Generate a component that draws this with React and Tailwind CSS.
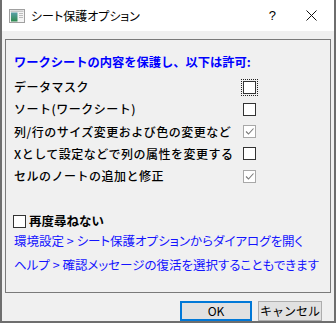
import React from "react";

const jp = "font-['Noto_Sans_CJK_JP','Noto_Sans',sans-serif]";

function Box({ checked, focus }) {
  return (
    <div
      className={`relative w-[13px] h-[13px] bg-white border ${checked ? "border-[#a8a8a8]" : "border-[#333333]"} ${focus ? "outline outline-1 outline-dotted outline-[#222] outline-offset-[1px]" : ""}`}
    >
      {checked && (
        <svg width="11" height="11" viewBox="0 0 11 11" className="absolute left-0 top-0">
          <path d="M2 5.5 L4.5 8 L9.5 2.5" fill="none" stroke="#7a7a7a" strokeWidth="1.1" />
        </svg>
      )}
    </div>
  );
}

const rows = [
  { t: "データマスク", c: false, f: true },
  { t: "ソート(ワークシート)", c: false },
  { t: "列/行のサイズ変更および色の変更など", c: true },
  { t: "Xとして設定などで列の属性を変更する", c: false },
  { t: "セルのノートの追加と修正", c: true },
];

export default function App() {
  return (
    <div className={`w-[336px] h-[323px] flex flex-col bg-[#f0f0f0] border-x-2 border-b-2 border-[#6e6e6e] ${jp}`}>
      <div className="h-[31px] shrink-0 bg-white flex items-center">
        <svg width="16" height="14" viewBox="0 0 16 14" className="ml-[7px] mt-[1px]">
          <defs>
            <linearGradient id="g" x1="0" y1="0" x2="0" y2="1">
              <stop offset="0" stopColor="#5aa0a8" />
              <stop offset="1" stopColor="#2f8a4e" />
            </linearGradient>
          </defs>
          <rect x="0.5" y="0.5" width="15" height="13" fill="#f4f4f4" stroke="#a0a0a0" />
          <rect x="1.5" y="1.5" width="13" height="1.5" fill="#c8c8c8" />
          <rect x="2" y="3.5" width="6.5" height="9" fill="url(#g)" />
          <rect x="10" y="4" width="4" height="1" fill="#bcbcbc" />
          <rect x="10" y="6" width="4" height="1" fill="#bcbcbc" />
          <rect x="10" y="8" width="4" height="1" fill="#bcbcbc" />
        </svg>
        <span className="ml-[6px] text-[12px] text-black [font-feature-settings:'palt'] leading-none">シート保護オプション</span>
        <span className="ml-auto mr-[30px] text-[13px] text-black font-['Liberation_Sans',sans-serif]">?</span>
        <svg width="11" height="11" viewBox="0 0 11 11" className="mr-[17px]">
          <path d="M0.5 0.5 L10.5 10.5 M10.5 0.5 L0.5 10.5" stroke="#111" strokeWidth="1" />
        </svg>
      </div>

      <div className="mt-[8px] mx-[3px] h-[254px] shrink-0 border border-[#7a7a7a] pl-[8px] pt-[14px] flex flex-col">
        <div className="h-[16px] flex items-center text-[12.25px] font-bold text-[#0000ff] leading-none">
          ワークシートの内容を保護し、以下は許可:
        </div>
        <div className="mt-[6px] flex flex-col">
          {rows.map((r) => (
            <div key={r.t} className="h-[22.25px] flex items-center">
              <div className="w-[229px] text-[12px] tracking-[0.5px] text-black font-medium leading-none">{r.t}</div>
              <Box checked={r.c} focus={r.f} />
            </div>
          ))}
        </div>
        <div className="mt-[24px] h-[20px] flex items-center -ml-[1px]">
          <Box />
          <span className="ml-[3px] text-[12.5px] font-bold text-black leading-none">再度尋ねない</span>
        </div>
        <div className="h-[20px] flex items-center text-[12.5px] text-[#1414ff] leading-none [font-feature-settings:'palt'] whitespace-nowrap">
          環境設定 &gt; シート保護オプションからダイアログを開く
        </div>
        <div className="mt-[4px] h-[20px] flex items-center text-[12.5px] text-[#1414ff] leading-none [font-feature-settings:'palt'] whitespace-nowrap">
          ヘルプ &gt; 確認メッセージの復活を選択することもできます
        </div>
      </div>

      <div className="mt-[8px] flex justify-end gap-[6px] pr-[12px]">
        <button className="w-[72px] h-[20px] bg-[#e1e1e1] border-2 border-[#0078d7] text-[12px] text-black leading-none flex items-center justify-center">
          OK
        </button>
        <button className="w-[64px] h-[20px] bg-[#e1e1e1] border border-[#adadad] text-[12px] text-black leading-none flex items-center justify-center">
          キャンセル
        </button>
      </div>
    </div>
  );
}
